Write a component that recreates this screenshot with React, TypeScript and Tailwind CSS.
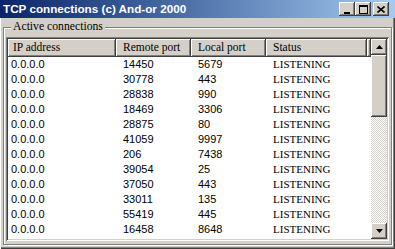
const rows = [
  ['14450', '5679'],
  ['30778', '443'],
  ['28838', '990'],
  ['18469', '3306'],
  ['28875', '80'],
  ['41059', '9997'],
  ['206', '7438'],
  ['39054', '25'],
  ['37050', '443'],
  ['33011', '135'],
  ['55419', '445'],
  ['16458', '8648'],
];

const serif = "font-['Liberation_Serif',serif]";
const sans = "font-['Liberation_Sans',Arial,sans-serif]";

const raised =
  'bg-[#d4d0c8] shadow-[inset_-1px_-1px_0_#404040,inset_1px_1px_0_#ffffff,inset_-2px_-2px_0_#808080]';

const HeaderCell = ({ label, w, pl }: { label: string; w: string; pl: string }) => (
  <div className={`${w} ${pl} ${raised} h-[18px] flex items-center text-[11.5px] text-black ${serif}`}>
    {label}
  </div>
);

const Arrow = ({ down }: { down?: boolean }) => (
  <svg width="7" height="4" viewBox="0 0 7 4">
    <path d={down ? 'M0 0H7L3.5 4Z' : 'M3.5 0L7 4H0Z'} fill="#000" />
  </svg>
);

const TitleButton = ({ children, className }: { children: React.ReactNode; className?: string }) => (
  <div className={`w-[16px] h-[14px] ${raised} flex items-center justify-center ${className ?? ''}`}>
    {children}
  </div>
);

export default function App() {
  return (
    <div className="w-[395px] h-[249px] bg-[#d4d0c8] flex flex-col overflow-hidden shadow-[inset_1px_0_0_#ffffff,inset_-1px_-1px_0_#404040,inset_-2px_-2px_0_#808080]">
      {/* title bar */}
      <div className="h-[18px] shrink-0 flex items-center bg-gradient-to-r from-[#0a246a] to-[#a6caf0] pl-[3px] pr-[6px]">
        <span className={`text-white font-bold text-[11.7px] leading-none ${sans}`}>
          TCP connections (c) And-or 2000
        </span>
        <div className="ml-auto flex items-center">
          <TitleButton>
            <svg width="8" height="9" viewBox="0 0 8 9">
              <rect x="1" y="7" width="6" height="2" fill="#000" />
            </svg>
          </TitleButton>
          <TitleButton>
            <svg width="9" height="9" viewBox="0 0 9 9">
              <rect x="0.5" y="0.5" width="8" height="8" fill="none" stroke="#000" />
              <rect x="0" y="0" width="9" height="2" fill="#000" />
            </svg>
          </TitleButton>
          <TitleButton className="ml-[2px]">
            <svg width="8" height="7" viewBox="0 0 8 7">
              <path d="M0.5 0.5L7.5 6.5M7.5 0.5L0.5 6.5" stroke="#000" strokeWidth="1.6" />
            </svg>
          </TitleButton>
        </div>
      </div>

      {/* body */}
      <div className="flex-1 flex flex-col pt-[2px] pl-[3px] pr-[3px] pb-[4px]">
        <fieldset className="flex-1 flex flex-col border border-[#808080] shadow-[inset_1px_1px_0_#ffffff,1px_1px_0_#ffffff] px-[2px] pt-[3px] pb-[3px] min-h-0">
          <legend className={`ml-[5px] px-[2px] bg-[#d4d0c8] text-[11.7px] leading-[14px] text-black ${serif}`}>
            Active connections
          </legend>

          {/* list box */}
          <div className="flex-1 flex bg-white p-[2px] shadow-[inset_1px_1px_0_#808080,inset_-1px_-1px_0_#ffffff,inset_2px_2px_0_#404040,inset_-2px_-2px_0_#d4d0c8] min-h-0">
            <div className="flex-1 flex flex-col overflow-hidden">
              <div className="flex shrink-0">
                <HeaderCell label="IP address" w="w-[108px]" pl="pl-[5px]" />
                <HeaderCell label="Remote port" w="w-[75px]" pl="pl-[7px]" />
                <HeaderCell label="Local port" w="w-[75px]" pl="pl-[7px]" />
                <HeaderCell label="Status" w="w-[101px]" pl="pl-[7px]" />
                <div className={`flex-1 h-[18px] ${raised}`} />
              </div>
              {rows.map(([remote, local], i) => (
                <div key={i} className="flex h-[15px] items-center text-black">
                  <div className={`w-[108px] pl-[3px] text-[11px] ${sans}`}>0.0.0.0</div>
                  <div className={`w-[75px] pl-[7px] text-[11px] ${sans}`}>{remote}</div>
                  <div className={`w-[75px] pl-[7px] text-[11px] ${sans}`}>{local}</div>
                  <div className={`w-[101px] pl-[7px] text-[11px] ${serif}`}>LISTENING</div>
                </div>
              ))}
            </div>

            {/* scrollbar */}
            <div className="w-[16px] flex flex-col [background:repeating-conic-gradient(#ffffff_0%_25%,#d4d0c8_0%_50%)_0_0/2px_2px]">
              <div className={`h-[16px] shrink-0 ${raised} flex items-center justify-center`}>
                <Arrow />
              </div>
              <div className={`h-[62px] shrink-0 ${raised}`} />
              <div className="flex-1" />
              <div className={`h-[16px] shrink-0 ${raised} flex items-center justify-center`}>
                <Arrow down />
              </div>
            </div>
          </div>
        </fieldset>
      </div>
    </div>
  );
}
